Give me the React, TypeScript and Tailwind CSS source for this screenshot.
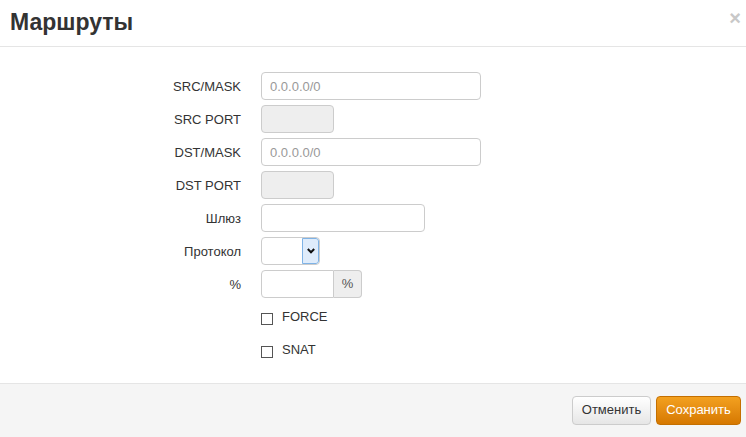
import React from 'react';

const FONT = { fontFamily: '"Liberation Sans", Arial, sans-serif' };

const Label: React.FC<{ text: string }> = ({ text }) => (
  <div className="w-[241px] shrink-0 text-right text-[13px] text-[#333] leading-none">{text}</div>
);

const Row: React.FC<{ label?: string; children: React.ReactNode }> = ({ label, children }) => (
  <div className="flex items-center h-[28px] mb-[5px] gap-[20px]">
    <Label text={label ?? ''} />
    {children}
  </div>
);

const TextInput: React.FC<{ w: number; placeholder?: string; disabled?: boolean }> = ({ w, placeholder, disabled }) => (
  <input
    disabled={disabled}
    placeholder={placeholder}
    style={{ width: w }}
    className={`h-[28px] rounded-[4px] border border-[#ccc] px-[8px] text-[13px] text-[#555] placeholder:text-[#999] outline-none ${
      disabled ? 'bg-[#eee]' : 'bg-white'
    }`}
  />
);

const Check: React.FC<{ text: string }> = ({ text }) => (
  <div className="flex items-center h-[28px] mb-[5px] gap-[20px]">
    <Label text="" />
    <div className="flex items-start gap-[9px]">
      <span className="mt-[3px] w-[12px] h-[12px] border border-[#555] bg-white" />
      <span className="text-[13px] text-[#333] leading-none">{text}</span>
    </div>
  </div>
);

export default function App() {
  return (
    <div className="w-[746px] h-[437px] bg-white flex flex-col" style={FONT}>
      {/* header */}
      <div className="h-[47px] shrink-0 border-b border-[#e5e5e5] flex items-center justify-between pl-[10px] pr-[5px]">
        <h4 className="text-[23px] font-bold text-[#333] leading-none mt-[-1px]">Маршруты</h4>
        <span className="text-[20px] font-bold text-[#c8c8c8] leading-none mb-[11px]">×</span>
      </div>

      {/* body */}
      <div className="flex-1 pt-[25px]">
        <Row label="SRC/MASK">
          <TextInput w={220} placeholder="0.0.0.0/0" />
        </Row>
        <Row label="SRC PORT">
          <TextInput w={73} disabled />
        </Row>
        <Row label="DST/MASK">
          <TextInput w={220} placeholder="0.0.0.0/0" />
        </Row>
        <Row label="DST PORT">
          <TextInput w={73} disabled />
        </Row>
        <Row label="Шлюз">
          <TextInput w={164} />
        </Row>
        <Row label="Протокол">
          <div className="flex h-[28px] w-[59px] rounded-[4px] border border-[#ccc] bg-white overflow-hidden">
            <div className="flex-1" />
            <div className="w-[17px] h-full bg-[#dfecfb] border border-[#7fb3e6] rounded-r-[3px] flex items-center justify-center">
              <svg width="8" height="6" viewBox="0 0 8 6">
                <path d="M0.8 1 L4 4.3 L7.2 1" fill="none" stroke="#111" strokeWidth="2" />
              </svg>
            </div>
          </div>
        </Row>
        <Row label="%">
          <div className="flex h-[28px]">
            <input className="w-[73px] h-full rounded-l-[4px] border border-[#ccc] bg-white outline-none" />
            <span className="w-[28px] h-full flex items-center justify-center border border-l-0 border-[#ccc] rounded-r-[4px] bg-[#eee] text-[13px] text-[#555]">
              %
            </span>
          </div>
        </Row>
        <Check text="FORCE" />
        <Check text="SNAT" />
      </div>

      {/* footer */}
      <div className="h-[54px] shrink-0 border-t border-[#e5e5e5] bg-[#f5f5f5] flex items-center justify-end gap-[5px] pr-[5px] pb-[1px]">
        <button className="h-[29px] w-[79px] rounded-[4px] border border-[#ccc] bg-gradient-to-b from-white to-[#e6e6e6] text-[13px] text-[#333]">
          Отменить
        </button>
        <button className="h-[29px] w-[85px] rounded-[4px] border border-[#c46f00] bg-gradient-to-b from-[#f3a11f] to-[#d67800] text-[13px] text-white">
          Сохранить
        </button>
      </div>
    </div>
  );
}
